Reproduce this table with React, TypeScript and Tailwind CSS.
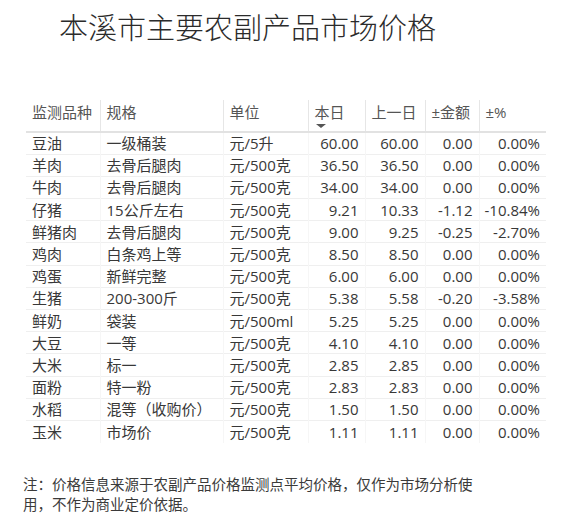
const rows: string[][] = [
  ['豆油', '一级桶装', '元/5升', '60.00', '60.00', '0.00', '0.00%'],
  ['羊肉', '去骨后腿肉', '元/500克', '36.50', '36.50', '0.00', '0.00%'],
  ['牛肉', '去骨后腿肉', '元/500克', '34.00', '34.00', '0.00', '0.00%'],
  ['仔猪', '15公斤左右', '元/500克', '9.21', '10.33', '-1.12', '-10.84%'],
  ['鲜猪肉', '去骨后腿肉', '元/500克', '9.00', '9.25', '-0.25', '-2.70%'],
  ['鸡肉', '白条鸡上等', '元/500克', '8.50', '8.50', '0.00', '0.00%'],
  ['鸡蛋', '新鲜完整', '元/500克', '6.00', '6.00', '0.00', '0.00%'],
  ['生猪', '200-300斤', '元/500克', '5.38', '5.58', '-0.20', '-3.58%'],
  ['鲜奶', '袋装', '元/500ml', '5.25', '5.25', '0.00', '0.00%'],
  ['大豆', '一等', '元/500克', '4.10', '4.10', '0.00', '0.00%'],
  ['大米', '标一', '元/500克', '2.85', '2.85', '0.00', '0.00%'],
  ['面粉', '特一粉', '元/500克', '2.83', '2.83', '0.00', '0.00%'],
  ['水稻', '混等（收购价）', '元/500克', '1.50', '1.50', '0.00', '0.00%'],
  ['玉米', '市场价', '元/500克', '1.11', '1.11', '0.00', '0.00%'],
];

const headers = ['监测品种', '规格', '单位', '本日', '上一日', '±金额', '±%'];

export default function App() {
  return (
    <div
      className="w-[567px] h-[529px] bg-white text-[#333] overflow-hidden"
      style={{ fontFamily: '"Open Sans", "Noto Sans CJK SC", sans-serif' }}
    >
      <h1 className="pl-[59px] pt-[8px] text-[29px] leading-[40px] font-light text-[#2b2b2b]">
        本溪市主要农副产品市场价格
      </h1>

      <table className="ml-[26px] mt-[52px] w-[520px] table-fixed border-collapse text-[15px]">
        <colgroup>
          <col className="w-[74px]" />
          <col className="w-[123px]" />
          <col className="w-[85px]" />
          <col className="w-[57px]" />
          <col className="w-[60px]" />
          <col className="w-[54px]" />
          <col className="w-[67px]" />
        </colgroup>
        <thead>
          <tr className="h-[32px] border-b-2 border-[#e2e2e2]">
            {headers.map((h, i) => (
              <th
                key={h}
                className={`align-top pt-[2px] pl-[6px] text-left font-normal text-[#555] leading-[20px] ${
                  i < headers.length - 1 ? 'border-r border-[#e6e6e6]' : ''
                }`}
              >
                <div>{h}</div>
                {i === 3 && (
                  <div className="w-0 h-0 ml-[1px] mt-[2px] border-l-[5px] border-r-[5px] border-t-[4px] border-l-transparent border-r-transparent border-t-[#555]" />
                )}
              </th>
            ))}
          </tr>
        </thead>
        <tbody>
          {rows.map((r, ri) => (
            <tr
              key={ri}
              className={`h-[22.2px] ${ri < rows.length - 1 ? 'border-b border-[#efefef]' : ''}`}
            >
              {r.map((c, ci) => (
                <td
                  key={ci}
                  className={`p-0 leading-[20px] whitespace-nowrap text-[#383838] ${
                    ci < 3 ? 'pl-[6px] text-left' : 'pr-[6px] text-right'
                  } ${ci < r.length - 1 ? 'border-r border-[#f6f6f6]' : ''}`}
                >
                  {c}
                </td>
              ))}
            </tr>
          ))}
        </tbody>
      </table>

      <p className="pl-[23px] mt-[32px] w-[500px] text-[14.5px] leading-[20px] text-[#3a3a3a]">
        注：价格信息来源于农副产品价格监测点平均价格，仅作为市场分析使用，不作为商业定价依据。
      </p>
    </div>
  );
}
